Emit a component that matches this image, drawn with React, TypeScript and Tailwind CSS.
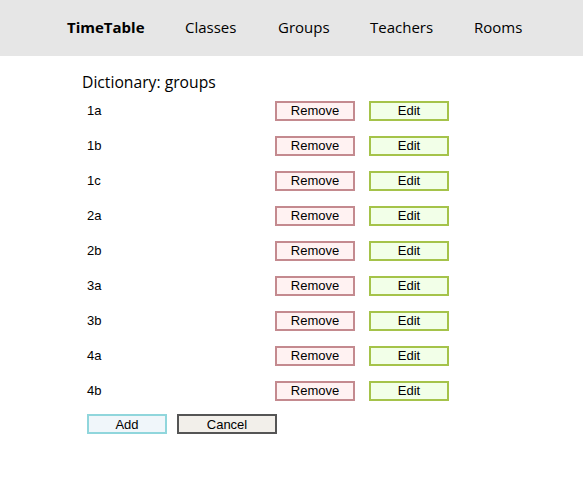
import React from "react";

const groups = ["1a", "1b", "1c", "2a", "2b", "3a", "3b", "4a", "4b"];

export default function App() {
  return (
    <div className="min-h-[480px] bg-white text-black" style={{ fontFamily: '"Liberation Sans", Arial, sans-serif' }}>
      <nav
        className="h-[56px] bg-[#e6e6e6] flex items-center pl-[67px] pb-[2px] text-[15px] text-black"
        style={{ fontFamily: '"Open Sans", "Noto Sans", sans-serif' }}
      >
        <span className="font-bold w-[118px]">TimeTable</span>
        <span className="w-[93px]">Classes</span>
        <span className="w-[92px]">Groups</span>
        <span className="w-[104px]">Teachers</span>
        <span>Rooms</span>
      </nav>
      <div className="pl-[82px] pt-[15px]">
        <div
          className="h-[22px] leading-[22px] text-[15.7px]"
          style={{ fontFamily: '"Open Sans", "Noto Sans", sans-serif' }}
        >
          Dictionary: groups
        </div>
        <div className="pl-[5px]">
          {groups.map((g) => (
            <div key={g} className="h-[35px] flex items-center text-[13px]">
              <span className="w-[188px]">{g}</span>
              <button className="w-[80px] h-[20px] border-2 border-[#c48a8f] bg-[#fff2f2] text-[13px] leading-none flex items-center justify-center">
                Remove
              </button>
              <button className="ml-[14px] w-[80px] h-[20px] border-2 border-[#a5c34a] bg-[#f2ffe8] text-[13px] leading-none flex items-center justify-center">
                Edit
              </button>
            </div>
          ))}
          <div className="mt-[6px] flex gap-[10px]">
            <button className="w-[80px] h-[20px] border-2 border-[#90d6dc] bg-[#f0f6fa] text-[13px] leading-none flex items-center justify-center">
              Add
            </button>
            <button className="w-[100px] h-[20px] border-2 border-[#555555] bg-[#f2efea] text-[13px] leading-none flex items-center justify-center">
              Cancel
            </button>
          </div>
        </div>
      </div>
    </div>
  );
}
